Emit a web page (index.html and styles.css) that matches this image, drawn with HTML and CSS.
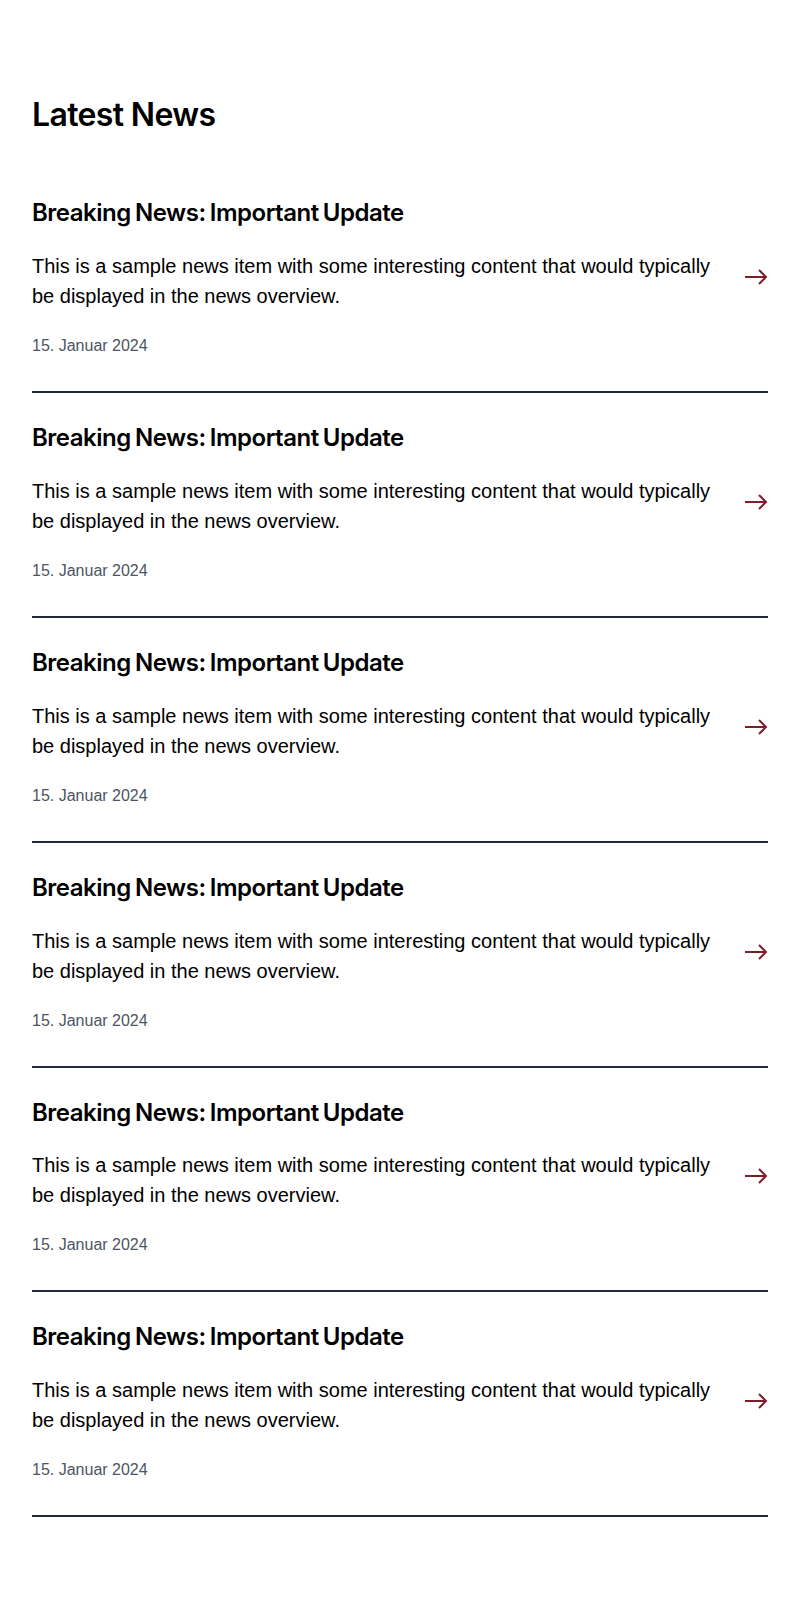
FILE: index.html
```html
<!DOCTYPE html>
<html lang="de">
<head>
<meta charset="utf-8">
<title>Latest News</title>
<link rel="stylesheet" href="styles.css">
</head>
<body>
<main class="page">
  <h1 class="page-title">Latest News</h1>
  <ul class="news-list">
    <li class="news-item">
      <h2 class="news-title">Breaking News: Important Update</h2>
      <div class="news-row">
        <p class="news-text">This is a sample news item with some interesting content that would typically be displayed in the news overview.</p>
        <svg class="news-arrow" viewBox="0 0 24 24" width="24" height="24" aria-hidden="true"><path d="M1 12H22M15 5l7 7-7 7"/></svg>
      </div>
      <p class="news-date">15. Januar 2024</p>
    </li>
    <li class="news-item">
      <h2 class="news-title">Breaking News: Important Update</h2>
      <div class="news-row">
        <p class="news-text">This is a sample news item with some interesting content that would typically be displayed in the news overview.</p>
        <svg class="news-arrow" viewBox="0 0 24 24" width="24" height="24" aria-hidden="true"><path d="M1 12H22M15 5l7 7-7 7"/></svg>
      </div>
      <p class="news-date">15. Januar 2024</p>
    </li>
    <li class="news-item">
      <h2 class="news-title">Breaking News: Important Update</h2>
      <div class="news-row">
        <p class="news-text">This is a sample news item with some interesting content that would typically be displayed in the news overview.</p>
        <svg class="news-arrow" viewBox="0 0 24 24" width="24" height="24" aria-hidden="true"><path d="M1 12H22M15 5l7 7-7 7"/></svg>
      </div>
      <p class="news-date">15. Januar 2024</p>
    </li>
    <li class="news-item">
      <h2 class="news-title">Breaking News: Important Update</h2>
      <div class="news-row">
        <p class="news-text">This is a sample news item with some interesting content that would typically be displayed in the news overview.</p>
        <svg class="news-arrow" viewBox="0 0 24 24" width="24" height="24" aria-hidden="true"><path d="M1 12H22M15 5l7 7-7 7"/></svg>
      </div>
      <p class="news-date">15. Januar 2024</p>
    </li>
    <li class="news-item">
      <h2 class="news-title">Breaking News: Important Update</h2>
      <div class="news-row">
        <p class="news-text">This is a sample news item with some interesting content that would typically be displayed in the news overview.</p>
        <svg class="news-arrow" viewBox="0 0 24 24" width="24" height="24" aria-hidden="true"><path d="M1 12H22M15 5l7 7-7 7"/></svg>
      </div>
      <p class="news-date">15. Januar 2024</p>
    </li>
    <li class="news-item">
      <h2 class="news-title">Breaking News: Important Update</h2>
      <div class="news-row">
        <p class="news-text">This is a sample news item with some interesting content that would typically be displayed in the news overview.</p>
        <svg class="news-arrow" viewBox="0 0 24 24" width="24" height="24" aria-hidden="true"><path d="M1 12H22M15 5l7 7-7 7"/></svg>
      </div>
      <p class="news-date">15. Januar 2024</p>
    </li>
  </ul>
</main>
</body>
</html>
```

FILE: styles.css
```css
* { box-sizing: border-box; }

html, body {
  margin: 0;
  padding: 0;
  background: #ffffff;
}

body {
  font-family: "Liberation Sans", Arial, sans-serif;
  color: #000000;
}

.page {
  padding: 96px 32px;
}

.page-title {
  margin: 0 0 34px;
  font-family: Inter, "Liberation Sans", sans-serif;
  font-size: 32px;
  line-height: 1.2;
  font-weight: 600;
  letter-spacing: -0.02em;
  color: #000000;
}

.news-list {
  list-style: none;
  margin: 0;
  padding: 0;
}

.news-item {
  padding: 31px 0 33px;
  border-bottom: 2px solid #1e293b;
}

.news-title {
  margin: 0 0 23px;
  font-family: Inter, "Liberation Sans", sans-serif;
  font-size: 24px;
  line-height: 1.2;
  font-weight: 600;
  letter-spacing: -0.02em;
  word-spacing: -0.06em;
  color: #000000;
}

.news-row {
  display: flex;
  align-items: flex-start;
  gap: 32px;
}

.news-text {
  flex: 1;
  margin: 0;
  font-size: 20px;
  line-height: 1.5;
}

.news-arrow {
  flex: none;
  margin-top: 14px;
  fill: none;
  stroke: #7f1d2b;
  stroke-width: 2;
  stroke-linecap: butt;
  stroke-linejoin: miter;
}

.news-date {
  margin: 23px 0 0;
  font-size: 16px;
  line-height: 24px;
  color: #4b5563;
}
```
